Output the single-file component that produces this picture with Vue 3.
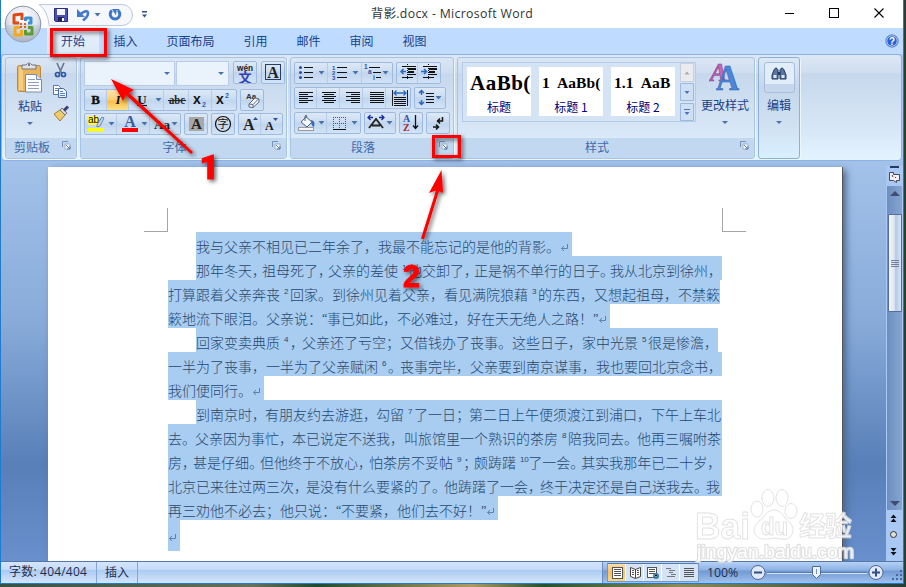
<template>
  <div class="desktop">
    <div class="window">
      <!-- 标题栏 -->
      <header class="titlebar">
        <div class="quick">
          <svg width="160" height="28" v-html="icons.quick" />
        </div>
        <div class="title">背影.docx - Microsoft Word</div>
        <svg class="controls" width="120" height="28" v-html="icons.controls" />
      </header>

      <!-- 选项卡 -->
      <nav class="tabs">
        <span
          v-for="tab in tabs"
          :key="tab.name"
          class="tab"
          :class="{ active: tab.active }"
          :style="{ width: tab.w + 'px' }"
        >{{ tab.name }}</span>
        <svg class="help" width="14" height="14" v-html="icons.help" />
      </nav>

      <!-- 功能区 -->
      <section class="ribbon">
        <div class="group clipboard">
          <div class="group-body clip-body">
            <div class="paste">
              <svg width="30" height="34" v-html="icons.paste" />
              <span class="big-label">粘贴</span>
              <i class="caret" />
            </div>
            <svg width="20" height="66" v-html="icons.clipSide" />
          </div>
          <div class="group-name">
            剪贴板<svg class="launcher" width="9" height="9" v-html="icons.launcher" />
          </div>
        </div>

        <div class="group font">
          <div class="group-body font-body">
            <div class="row first">
              <div class="combo wide"><i class="caret" /></div>
              <div class="combo"><i class="caret" /></div>
              <div v-for="b in fontTop" :key="b.icon" class="btn-set">
                <svg :width="b.w" height="21" v-html="icons[b.icon]" />
              </div>
            </div>
            <div v-for="(row, r) in fontRows" :key="r" class="row">
              <div v-for="(set, s) in row" :key="s" class="btn-set">
                <svg
                  v-for="b in set"
                  :key="b.icon"
                  :class="{ pressed: b.pressed }"
                  :width="b.w"
                  height="20"
                  v-html="icons[b.icon]"
                />
              </div>
            </div>
          </div>
          <div class="group-name">
            字体<svg class="launcher" width="9" height="9" v-html="icons.launcher" />
          </div>
        </div>

        <div class="group paragraph">
          <div class="group-body para-body">
            <div v-for="(row, r) in paraRows" :key="r" class="row">
              <div v-for="(set, s) in row" :key="s" class="btn-set">
                <svg v-for="b in set" :key="b.icon" :width="b.w" height="20" v-html="icons[b.icon]" />
              </div>
            </div>
          </div>
          <div class="group-name">
            段落<svg class="launcher" width="9" height="9" v-html="icons.launcher" />
          </div>
        </div>

        <div class="group styles">
          <div class="group-body style-body">
            <div class="gallery">
              <div v-for="s in styleCards" :key="s.name" class="card">
                <div class="sample" :class="{ small: s.small }">{{ s.sample }}</div>
                <div class="card-name">{{ s.name }}</div>
              </div>
              <svg width="14" height="60" v-html="icons.galleryScroll" />
            </div>
            <div class="change">
              <svg width="32" height="30" v-html="icons.change" />
              <span class="big-label">更改样式</span>
              <i class="caret" />
            </div>
          </div>
          <div class="group-name">
            样式<svg class="launcher" width="9" height="9" v-html="icons.launcher" />
          </div>
        </div>

        <div class="group edit">
          <div class="edit-box"><svg width="16" height="16" v-html="icons.find" /></div>
          <span class="big-label">编辑</span>
          <i class="caret" />
        </div>
      </section>

      <!-- 文档 -->
      <main class="workspace">
        <article class="page">
          <div class="corners"><i class="corner left" /><i class="corner right" /></div>
          <p
            v-for="(line, i) in lines"
            :key="i"
            class="line"
            :class="{ indent: line.indent, last: line.last }"
            :style="{ width: line.w + 'px' }"
          ><span
            v-for="(t, k) in split(line.text)"
            :key="k"
            :class="t.type"
            :style="t.type === 'narrow' ? { width: line.narrow + 'px' } : null"
          >{{ t.text }}</span><svg v-if="line.end" class="mark" width="9" height="9" v-html="icons.mark" /></p>
        </article>
        <aside class="scroll">
          <svg width="17" height="20" v-html="icons.ruler" />
          <div class="track">
            <i class="arrow up" />
            <div class="thumb"><i /><i /><i /><i /></div>
            <i class="arrow down" />
          </div>
          <svg width="17" height="51" v-html="icons.browse" />
        </aside>
      </main>

      <!-- 状态栏 -->
      <footer class="status">
        <div class="status-left">
          <span class="cell count">字数: 404/404</span>
          <span class="cell mode">插入</span>
        </div>
        <div class="status-right">
          <div class="views">
            <svg
              v-for="(v, i) in views"
              :key="v"
              :class="{ current: i === 0 }"
              width="18"
              height="17"
              v-html="icons[v]"
            />
          </div>
          <span class="percent">100%</span>
          <svg width="156" height="21" v-html="icons.zoom" />
        </div>
      </footer>
    </div>

    <svg class="office" width="40" height="40" viewBox="0 0 40 40" v-html="icons.office" />
    <svg class="watermark" width="170" height="80" v-html="icons.watermark" />
    <svg class="notes" width="906" height="587" v-html="icons.notes" />
  </div>
</template>

<script setup>
const tabs = [
  { name: '开始', w: 52, active: true },
  { name: '插入', w: 53 },
  { name: '页面布局', w: 77 },
  { name: '引用', w: 53 },
  { name: '邮件', w: 53 },
  { name: '审阅', w: 53 },
  { name: '视图', w: 53 },
]

const fontTop = [{ icon: 'pinyin', w: 22 }, { icon: 'charBorder', w: 22 }]

const fontRows = [
  [
    [
      { icon: 'bold', w: 22 },
      { icon: 'italic', w: 22, pressed: true },
      { icon: 'underline', w: 35 },
      { icon: 'strike', w: 25 },
      { icon: 'sub', w: 23 },
      { icon: 'sup', w: 24 },
    ],
    [{ icon: 'clear', w: 22 }],
  ],
  [
    [{ icon: 'highlight', w: 32 }, { icon: 'fontColor', w: 33 }, { icon: 'changeCase', w: 30 }],
    [{ icon: 'shade', w: 22 }],
    [{ icon: 'circled', w: 22 }],
    [{ icon: 'grow', w: 22 }, { icon: 'shrink', w: 21 }],
  ],
]

const paraRows = [
  [
    [{ icon: 'bullets', w: 33 }, { icon: 'numbers', w: 34 }, { icon: 'multi', w: 30 }],
    [{ icon: 'outdent', w: 21 }, { icon: 'indent', w: 22 }],
  ],
  [
    [
      { icon: 'alignL', w: 22 },
      { icon: 'alignC', w: 23 },
      { icon: 'alignR', w: 23 },
      { icon: 'alignJ', w: 23 },
      { icon: 'distribute', w: 24 },
    ],
    [{ icon: 'spacing', w: 30 }],
  ],
  [
    [{ icon: 'fill', w: 32 }, { icon: 'borders', w: 33 }],
    [{ icon: 'asian', w: 30 }],
    [{ icon: 'sort', w: 22 }],
    [{ icon: 'showMarks', w: 22 }],
  ],
]

const styleCards = [
  { sample: 'AaBb(', name: '标题' },
  { sample: '1  AaBb(', name: '标题 1', small: true },
  { sample: '1.1  AaB', name: '标题 2', small: true },
]

const views = ['viewPrint', 'viewRead', 'viewWeb', 'viewOutline', 'viewDraft']

// [n] 是注释编号，{，} 是压缩过的标点
const lines = [
  { indent: true, w: 376, end: true, text: '我与父亲不相见已二年余了，我最不能忘记的是他的背影。' },
  { indent: true, w: 526, narrow: 10, text: '那年冬天{，}祖母死了{，}父亲的差使[1]他交卸了{，}正是祸不单行的日子{。}我从北京到徐州，' },
  { w: 552, text: '打算跟着父亲奔丧[2]回家。到徐州见着父亲，看见满院狼藉[3]的东西，又想起祖母，不禁簌' },
  { w: 442, end: true, text: '簌地流下眼泪。父亲说：“事已如此，不必难过，好在天无绝人之路！”' },
  { indent: true, w: 522, narrow: 12, text: '回家变卖典质[4]{，}父亲还了亏空；又借钱办了丧事。这些日子，家中光景[5]很是惨澹，' },
  { w: 554, narrow: 12, text: '一半为了丧事，一半为了父亲赋闲[6]{。}丧事完毕，父亲要到南京谋事，我也要回北京念书，' },
  { w: 96, end: true, text: '我们便同行。' },
  { indent: true, w: 526, narrow: 13, text: '到南京时{，}有朋友约去游逛{，}勾留[7]了一日{；}第二日上午便须渡江到浦口，下午上车北' },
  { w: 554, narrow: 13, text: '去{。}父亲因为事忙{，}本已说定不送我，叫旅馆里一个熟识的茶房[8]陪我同去{。}他再三嘱咐茶' },
  { w: 554, narrow: 11, text: '房{，}甚是仔细{。}但他终于不放心{，}怕茶房不妥帖[9]{；}颇踌躇[10]了一会{。}其实我那年已二十岁，' },
  { w: 554, narrow: 12, text: '北京已来往过两三次{，}是没有什么要紧的了{。}他踌躇了一会{，}终于决定还是自己送我去{。}我' },
  { w: 330, end: true, text: '再三劝他不必去；他只说：“不要紧，他们去不好！”' },
  { w: 12, end: true, last: true, text: '' },
]

function split(text) {
  return (text.match(/\[\d+\]|\{.\}|[“”]|[^[{“”]+/g) || []).map((s) => {
    if (s[0] === '[') return { type: 'note', text: s.slice(1, -1) }
    if (s[0] === '{') return { type: 'narrow', text: s[1] }
    if (s === '“' || s === '”') return { type: 'quote', text: s }
    return { type: 'run', text: s }
  })
}

const serif = 'font-family="Liberation Serif, serif" font-weight="bold"'
const sans = 'font-family="Liberation Sans, sans-serif"'
const caret = (x, y = 9) => `<path d="M${x - 0.5} ${y}h6l-3 3.500z" fill="#4a72a8"/>`

// 一组横线：[x, y, 长度]
const bars = (list, color = '#111') =>
  list.map(([x, y, w]) => `<rect x="${x}" y="${y}" width="${w}" height="1" fill="${color}"/>`).join('')

const icons = {
  quick: `
    <path d="M38 4.500H121a10.500 10.500 0 0 1 0 21H48Q47 11 38 4.500Z" fill="#f5f8fd" stroke="#bdc9dd"/>
    <path d="M53.500 8.500h13v13h-12l-1-1z" fill="#4b4fb8" stroke="#2b2d7d"/><path d="M56 9h8v6h-8z" fill="#f4f6ff"/><path d="M57 17h6v4h-6z" fill="#23234f"/><path d="M61 18h2v3h-2z" fill="#fff"/>
    <path d="M79 14.500q8-6 8-1q0 3-5 7" fill="none" stroke="#4378cb" stroke-width="2.600"/><path d="M76 9v8h8z" fill="#4378cb"/>
    ${caret(94, 13)}
    <path d="M111 10.500a4.800 4.800 0 1 0 6 0" fill="none" stroke="#3e75cb" stroke-width="3"/><path d="M111 9h7v1.500h-2.500l-.5 5z" fill="#3e75cb"/>
    <path d="M141 11h5v1.500h-5zM141 14.500h5l-2.500 3z" fill="#2c4f88"/>`,
  controls: `
    <path d="M14 13.500h9" stroke="#000"/><rect x="58.500" y="8.500" width="9" height="9" fill="none" stroke="#000"/>
    <path d="M103.500 8.500l9 9m0-9l-9 9" stroke="#000" stroke-width="1.100"/>`,
  help: `
    <circle cx="7" cy="7" r="6.200" fill="#2a63d4" stroke="#6b8fc9"/><circle cx="7" cy="7" r="5.200" fill="none" stroke="#cfe0fa" stroke-width=".8"/>
    <text x="7" y="10.500" font-size="10" text-anchor="middle" fill="#fff" font-weight="bold" ${sans}>?</text>`,
  office: `
    <defs><radialGradient id="orb" cx=".5" cy=".3" r=".7"><stop offset="0" stop-color="#fff"/><stop offset=".6" stop-color="#dfe4ee"/><stop offset="1" stop-color="#a3adc0"/></radialGradient></defs>
    <circle cx="20" cy="20" r="17.800" fill="url(#orb)" stroke="#8793a9"/><path d="M3 22a17 17 0 0 0 34 0q-17-5-34 0" fill="#b5bfce" opacity=".4"/>
    <g fill="none" stroke-width="3" stroke-linejoin="round"><path d="M19 16v-6l-8 1v8h5" stroke="#dd4a18"/><path d="M22.500 17v-3H28v5h-3" stroke="#3d8fd0"/><path d="M17 23.500h-5V31h6.500v-5" stroke="#f1a91d"/><path d="M25 23.500h4V30h-6.500v-4" stroke="#5b9d33"/></g>
    <g fill="#e3621b"><rect x="17" y="19" width="2" height="2"/><rect x="21" y="19" width="2" height="2"/><rect x="17" y="22" width="2" height="2"/><rect x="21" y="22" width="2" height="2"/></g>`,
  paste: `
    <rect x="2.500" y="3.500" width="23" height="26" rx="2" fill="#e9b45c" stroke="#bb8740"/><path d="M4 5h4v23H4z" fill="#f5ce82"/>
    <path d="M7 7V3h4q3-4 6 0h4v4z" fill="#dfe1e5" stroke="#707783"/><circle cx="14" cy="3" r="1" fill="#555"/>
    <path d="M10.500 12.500h11l5 5v12.500h-16z" fill="#fbfcff" stroke="#7a8ba8"/><path d="M21.500 12.500v5h5" fill="#dce5f4" stroke="#7a8ba8"/>
    ${bars([[13, 17, 7], [13, 20, 11], [13, 23, 11], [13, 26, 11]], '#8ea0c2')}`,
  clipSide: `
    <path d="M7 1l4.500 10M14 1L9.500 11" stroke="#64748c" stroke-width="1.600"/><circle cx="7.500" cy="12.500" r="2" fill="none" stroke="#2e56a6" stroke-width="1.700"/><circle cx="13.500" cy="12.500" r="2" fill="none" stroke="#2e56a6" stroke-width="1.700"/>
    <path d="M3.500 23.500h5l2 2v7h-7z" fill="#fff" stroke="#5775ad"/><path d="M8.500 26.500h5l3 3v6h-8z" fill="#f1f5fd" stroke="#4668a8"/>${bars([[10, 29, 3], [10, 31, 5], [10, 33, 5], [5, 26, 3], [5, 28, 3]], '#5b80c0')}
    <path d="M4 52l6-4 5 5-5 6z" fill="#eecb6c" stroke="#a77e2d"/><path d="M10 48l2-2 5 5-2 2z" fill="#d8d8dc" stroke="#777"/><path d="M14 48.500l4-4" stroke="#3b3e7b" stroke-width="3"/>`,
  launcher: `
    <path d="M.5 6V.5H6" fill="none" stroke="#7792b8"/><path d="M3 3h5v5H3z" fill="#fff" stroke="#9bb0cc"/><path d="M4 4l4 4M8 5v3H5" stroke="#5b7fae" fill="none"/>`,
  pinyin: `
    <text x="11" y="9" font-size="9" text-anchor="middle" font-weight="bold" fill="#222" ${sans} textLength="16" lengthAdjust="spacingAndGlyphs">wén</text>
    <text x="11" y="19.500" font-size="13" text-anchor="middle" font-weight="bold" fill="#3340b0" font-family="Noto Sans CJK SC, sans-serif">文</text>`,
  charBorder: `<rect x="3.500" y="2.500" width="15" height="15" fill="none" stroke="#2b3b58"/><text x="11" y="15.500" font-size="16" text-anchor="middle" fill="#222" ${serif}>A</text>`,
  bold: `<text x="10.500" y="14" font-size="13" text-anchor="middle" fill="#111" stroke="#111" stroke-width=".4" ${serif}>B</text>`,
  italic: `<text x="11" y="14" font-size="13" text-anchor="middle" font-style="italic" fill="#111" ${serif}>I</text>`,
  underline: `<text x="13" y="13.500" font-size="13" text-anchor="middle" fill="#111" ${serif}>U</text><path d="M8 15.500h10" stroke="#111"/>${caret(27, 8)}`,
  strike: `<text x="13" y="13.500" font-size="13" text-anchor="middle" fill="#222" ${serif} textLength="16" lengthAdjust="spacingAndGlyphs">abc</text><path d="M4 10.500h18" stroke="#222"/>`,
  sub: `<text x="4" y="14" font-size="14" fill="#111" ${sans} font-weight="bold">x</text><text x="13" y="17" font-size="7" font-weight="bold" fill="#2a5bb8" ${sans}>2</text>`,
  sup: `<text x="4" y="14" font-size="14" fill="#111" ${sans} font-weight="bold">x</text><text x="13" y="8" font-size="7" font-weight="bold" fill="#2a5bb8" ${sans}>2</text>`,
  clear: `<text x="10" y="9" font-size="8" text-anchor="middle" font-weight="bold" fill="#333" ${sans}>Aa</text><path d="M8 14l6-6 4 1v3l-6 5.500-4-.5z" fill="#f6f7fb" stroke="#5a6785"/><path d="M8 14l4 .5 5.500-5.500M12 14.500v3" stroke="#5a6785" fill="none"/>`,
  highlight: `<path d="M3 2h10v9H3z" fill="#ffff3d"/><text x="3" y="9" font-size="10" fill="#111" ${sans}>ab</text><path d="M12 11l5-8 2 1-4 8-3 1z" fill="#c9d6ee" stroke="#56698d" stroke-width=".8"/><path d="M3 14h16v3.500H3z" fill="#ff0"/>${caret(24, 8)}`,
  fontColor: `<text x="13" y="13" font-size="16" text-anchor="middle" fill="#3a5ba0" ${serif}>A</text><path d="M5 14h16v4H5z" fill="#f00"/>${caret(25, 8)}`,
  changeCase: `<text x="4" y="15" font-size="13" fill="#222" ${serif} textLength="16" lengthAdjust="spacingAndGlyphs">Aa</text>${caret(22, 8)}`,
  shade: `<path d="M4 3h15v14H4z" fill="#a8a8a8"/><text x="11.500" y="15" font-size="15" text-anchor="middle" fill="#222" ${serif}>A</text>`,
  circled: `<circle cx="11" cy="10" r="7.500" fill="none" stroke="#111" stroke-width="1.200"/><text x="11" y="14" font-size="11" text-anchor="middle" fill="#111" font-family="Noto Sans CJK SC, sans-serif">字</text>`,
  grow: `<text x="4" y="16" font-size="16" fill="#222" ${serif}>A</text><path d="M14 6h5l-2.500-3z" fill="#28519b"/>`,
  shrink: `<text x="4" y="16" font-size="12" fill="#222" ${serif}>A</text><path d="M12 4h5l-2.500 3z" fill="#28519b"/>`,
  bullets: `<g fill="#2b4f9c"><circle cx="5.500" cy="4.500" r="1.500"/><circle cx="5.500" cy="9.500" r="1.500"/><circle cx="5.500" cy="14.500" r="1.500"/></g>${bars([[9, 4, 9], [9, 9, 9], [9, 14, 9]])}${caret(24, 8)}`,
  numbers: `<g font-size="6" fill="#2b4f9c" font-weight="bold" ${sans}><text x="4" y="7">1</text><text x="4" y="12">2</text><text x="4" y="17">3</text></g>${bars([[9, 4, 10], [9, 9, 10], [9, 14, 10]])}${caret(25, 8)}`,
  multi: `<g font-size="6.500" fill="#2b4f9c" font-weight="bold" ${sans}><text x="2" y="6">1</text><text x="6" y="11">a</text><text x="11" y="17">i</text></g>${bars([[7, 4, 11], [11, 9, 8], [14, 14, 5]])}${caret(21, 8)}`,
  outdent: `${bars([[5, 3, 14], [11, 6, 8], [11, 8, 6], [11, 11, 8], [5, 14, 11]])}${bars([[11, 5, 8], [11, 9, 6]])}<path d="M10.500 1v16" stroke="#111" stroke-dasharray="1 1"/><path d="M9 8.500H4M6.500 6L4 8.500 6.500 11" stroke="#2c66c4" fill="none" stroke-width="1.500"/>`,
  indent: `${bars([[5, 3, 14], [11, 6, 8], [11, 8, 6], [11, 11, 8], [5, 14, 11]])}${bars([[11, 5, 8], [11, 9, 6]])}<path d="M10.500 1v16" stroke="#111" stroke-dasharray="1 1"/><path d="M3 8.500h5M6 6l2.500 2.500L6 11" stroke="#2c66c4" fill="none" stroke-width="1.500"/>`,
  alignL: bars([[4, 4, 14], [4, 6, 9], [4, 8, 14], [4, 10, 9], [4, 12, 14], [4, 14, 9]]),
  alignC: bars([[5, 4, 14], [7, 6, 10], [5, 8, 14], [7, 10, 10], [5, 12, 14], [7, 14, 10]]),
  alignR: bars([[6, 4, 14], [11, 6, 9], [6, 8, 14], [11, 10, 9], [6, 12, 14], [11, 14, 9]]),
  alignJ: bars([[7, 4, 14], [7, 6, 14], [7, 8, 14], [7, 10, 14], [7, 12, 14], [7, 14, 14]]),
  distribute: `<path d="M6.500 2v16M21.500 2v16" stroke="#222"/><path d="M8 5h12M10.500 2.500L8 5l2.500 2.500M17.500 2.500L20 5l-2.500 2.500" stroke="#2c66c4" fill="none" stroke-width="1.300"/>${bars([[8, 9, 12], [8, 11, 12], [8, 13, 12], [8, 15, 12], [8, 17, 12]])}`,
  spacing: `<path d="M6.500 2.500v4.500M6.500 12v4.500M4 5L6.500 2.500 9 5M4 14l2.500 2.500L9 14" stroke="#2c66c4" fill="none" stroke-width="1.500"/>${bars([[11, 5, 8], [11, 8, 8], [11, 11, 8], [11, 14, 8]])}${caret(21, 8)}`,
  fill: `<path d="M6 9l5-5 6 5-5 5z" fill="#f6f8fc" stroke="#49607f"/><path d="M10 8V3q1.500-2 2 1" stroke="#49607f" fill="none"/><path d="M16 7q5 1 3 7q-3-1-3-7" fill="#3a68b8"/><rect x="3.500" y="14.500" width="15" height="3" fill="#f5f5f5" stroke="#9a9a9a"/>${caret(24, 8)}`,
  borders: `<path d="M6.500 4v12M12.500 4v12M18.500 4v12M6 4.500h13M6 10.500h13" stroke="#555" stroke-dasharray="1 1" fill="none"/><path d="M6 16.500h13" stroke="#111"/>${caret(25, 8)}`,
  asian: `<path d="M4 15L11 6 18 15M7 12.500h8" stroke="#222" stroke-width="1.800" fill="none"/><path d="M3 4.500h5M5.500 2L3 4.500 5.500 7M19 4.500h-5M16.500 2L19 4.500 16.500 7" stroke="#1a2b9c" fill="none" stroke-width="1.300"/>${caret(22, 8)}`,
  sort: `<text x="3" y="9" font-size="10" fill="#2b57a8" ${serif}>A</text><text x="3" y="18" font-size="10" fill="#a32d2d" ${serif}>Z</text><path d="M15.500 2v13M13 12.500l2.500 3 2.500-3" stroke="#111" stroke-width="1.300" fill="none"/>`,
  showMarks: `<path d="M15.500 4v4H11M13 5.500L10.500 8l2.500 2.500M6 14h5M9 11.500l2.500 2.500L9 16.500" stroke="#111" stroke-width="1.500" fill="none"/>`,
  galleryScroll: `
    <path d="M.5.500h13v18H.5z" fill="#e9ebee" stroke="#c5cfdd"/><path d="M.5 20.500h13v17H.5zM.5 40.500h13v17H.5z" fill="#cfdff4" stroke="#9db8dd"/>
    <path d="M4.500 11.500h5l-2.500-3z" fill="#aaa"/><path d="M4.500 28h5L7 31zM4.500 49h5L7 52z" fill="#4a76b8"/><path d="M4 46.500h6" stroke="#4a76b8"/>`,
  change: `
    <g ${serif} stroke-width=".6"><text x="1" y="19" font-size="25" fill="#c368bd" stroke="#8d3d8b" font-style="italic" textLength="17" lengthAdjust="spacingAndGlyphs">A</text>
    <text x="7" y="28" font-size="35" fill="#4c87dd" stroke="#2d5ea9" textLength="23" lengthAdjust="spacingAndGlyphs">A</text></g>`,
  find: `
    <path d="M3 4q2-4 4 0v9H1V9zM13 4q-2-4-4 0v9h6V9z" fill="#5b74a4" stroke="#23395f"/><path d="M7 6h2v3H7z" fill="#23395f"/><path d="M2.500 9h3v3h-3zM10.500 9h3v3h-3z" fill="#dbe6f8"/>`,
  mark: `<path d="M7.500 1v4.500H1.500M4 3L1.500 5.500 4 8" stroke="#5f82ab" fill="none"/>`,
  ruler: `<path d="M4 1h9" stroke="#233b5f" stroke-width="2"/><path d="M3.500 6.500h4v2h6v6h-3v2l-3-2h-4z" fill="#f6f0f4" stroke="#444b5c"/><path d="M6 9l1 2M9 11l1 1" stroke="#444"/>`,
  browse: `
    <path d="M4.500 8L7.500 4.500 10.500 8zM4.500 12L7.500 8.500 10.500 12z" fill="#111"/><circle cx="7.500" cy="24.500" r="3" fill="#e0e0d8" stroke="#333"/>
    <path d="M4.500 38L7.500 41.500 10.500 38zM4.500 42L7.500 45.500 10.500 42z" fill="#111"/>`,
  viewPrint: `<rect x="4.500" y="3.500" width="10" height="11" fill="#fff" stroke="#555"/>${bars([[6, 5, 7], [6, 7, 7], [6, 9, 7], [6, 11, 7]], '#555')}`,
  viewRead: `<path d="M4.500 3.500l5 2 5-2v9l-5 2-5-2zM9.500 5v9" fill="#fff" stroke="#444"/>${bars([[6, 6, 2], [6, 8, 2], [6, 10, 2], [11, 6, 2], [11, 8, 2], [11, 10, 2]], '#555')}`,
  viewWeb: `<rect x="3.500" y="3.500" width="9" height="10" fill="#fff" stroke="#555"/>${bars([[5, 5, 6], [5, 7, 6], [5, 9, 6]], '#555')}<circle cx="12" cy="12" r="3" fill="#3779bb"/><path d="M10 11l2 2 2-2" stroke="#5aaa55"/>`,
  viewOutline: bars([[4, 4, 5], [7, 6, 6], [7, 8, 4], [9, 10, 5], [5, 12, 8]], '#777'),
  viewDraft: bars([[4, 4, 10], [4, 6, 10], [4, 8, 10], [4, 10, 10], [4, 12, 10]], '#555'),
  zoom: `
    <path d="M20 10.500h100" stroke="#5779ab"/><path d="M20 11.500h100" stroke="#d9e6fa"/>
    <g fill="#dfe9f8" stroke="#4d6998"><circle cx="11" cy="10.500" r="7"/><circle cx="129" cy="10.500" r="7"/></g>
    <path d="M7 10.500h8M125 10.500h8M129 6.500v8" stroke="#314f80" stroke-width="2"/>
    <path d="M65.500 4.500h8v8l-4 4-4-4z" fill="#eef3fb" stroke="#4d6998"/><path d="M69.500 7v5" stroke="#7790b6"/>
    <g fill="#46689f"><rect x="153" y="8" width="2" height="2"/><rect x="149" y="12" width="2" height="2"/><rect x="153" y="12" width="2" height="2"/><rect x="145" y="16" width="2" height="2"/><rect x="149" y="16" width="2" height="2"/><rect x="153" y="16" width="2" height="2"/></g>`,
  watermark: `
    <g fill="#fff" stroke="#dedede" stroke-width="1" opacity=".88" stroke-linejoin="round" font-weight="bold">
      <text x="2" y="51" font-size="37" textLength="55" lengthAdjust="spacingAndGlyphs" ${sans}>Bai</text>
      <ellipse cx="64" cy="21" rx="6" ry="8"/><ellipse cx="75" cy="10" rx="6" ry="8.500"/><ellipse cx="89" cy="10" rx="6" ry="8.500"/><ellipse cx="98" cy="23" rx="6" ry="7.500"/>
      <path d="M81 22q7 0 11 8q9 6 8 14q-3 9-12 7q-7-2-14 0q-11 1-13-8q0-7 8-12q5-9 12-9z"/>
      <text x="68" y="47" font-size="24" textLength="27" lengthAdjust="spacingAndGlyphs" ${sans}>du</text>
      <text x="106" y="48" font-size="27" textLength="53" font-family="Noto Sans CJK SC, sans-serif">经验</text>
      <text x="4" y="70" font-size="18" font-weight="normal" textLength="157" lengthAdjust="spacingAndGlyphs" stroke-width="2.400" paint-order="stroke" ${sans}>jingyan.baidu.com</text>
    </g>`,
  notes: `
    <defs><filter id="soft" x="-20%" y="-20%" width="150%" height="150%"><feDropShadow dx="2" dy="2" stdDeviation="2" flood-color="#000" flood-opacity=".6"/></filter></defs>
    <g fill="none" stroke="#f00" stroke-width="3" filter="url(#soft)"><rect x="51.500" y="29.500" width="54" height="26"/><rect x="433.500" y="136.500" width="26" height="20"/></g>
    <g fill="#f00" filter="url(#soft)">
      <path d="M111 79l23 11-5 3 64 59-2 2-65-59-3 6z"/>
      <path d="M441.500 170l1.500 23-4-2-15 48.500-3-1L436 190.500l-7 2.500z"/>
      <text x="199.500" y="178.500" font-size="34" font-weight="900" stroke="#f00" stroke-width="1" font-family="Roboto, sans-serif">1</text>
      <text x="403" y="286.500" font-size="32" font-weight="bold" stroke="#f00" stroke-width="1" ${sans} textLength="17" lengthAdjust="spacingAndGlyphs">2</text>
    </g>`,
}
</script>

<style>
body {
  overflow: hidden;
}
</style>

<style scoped>
.desktop {
  position: relative;
  box-sizing: border-box;
  width: 906px;
  height: 587px;
  padding-right: 2px;
  overflow: hidden;
  background: linear-gradient(90deg, #355343, #67705a 28%, #1e4b2e 35%, #b09a60 52%, #25512b 60%, #8b8b55 75%, #263e35);
  font-family: "Noto Sans CJK SC", sans-serif;
  font-size: 12px;
  color: #15428b;
}

.window {
  box-sizing: border-box;
  display: flex;
  flex-direction: column;
  width: 904px;
  height: 584px;
  border: 1px solid #1e7bd0;
  border-top: none;
  background: #a5c5f0;
}

.titlebar {
  display: flex;
  flex: none;
  height: 28px;
  background: #fff;
}

.quick {
  width: 370px;
}

.title {
  flex: 1;
  font-family: "Open Sans", "Noto Sans CJK SC", sans-serif;
  font-size: 12.3px;
  line-height: 27px;
  letter-spacing: 0.33px;
  color: #333;
  white-space: nowrap;
}

.controls {
  margin-right: 12px;
}

/* 选项卡 */
.tabs {
  display: flex;
  flex: none;
  align-items: center;
  box-sizing: border-box;
  height: 26px;
  padding: 0 4px 0 46px;
  background: #bfdbff;
}

.tab {
  height: 26px;
  line-height: 26px;
  text-align: center;
}

.tab.active {
  background: linear-gradient(#e8f1fd, #dce8f6);
}

.help {
  margin-left: auto;
}

/* 功能区 */
.ribbon {
  display: flex;
  flex: none;
  gap: 3px;
  box-sizing: border-box;
  height: 107px;
  margin: 0 1px 0 0;
  padding: 2px;
  border: 1px solid #8db2e3;
  border-radius: 4px;
  background: linear-gradient(#dde8f5, #cfddef 17%, #c7d8ed 18%, #d9e8f7 75%, #e3f4ff);
}

.group {
  display: flex;
  flex-direction: column;
  flex: none;
  box-sizing: border-box;
  height: 102px;
  border: 1px solid #a9c3e2;
  border-radius: 3px;
  overflow: hidden;
  box-shadow: 1px 1px 0 #edf5fd;
}

.clipboard {
  width: 72px;
  margin-left: 1px;
}

.font { width: 207px; }
.paragraph { width: 164px; }
.styles { width: 298px; }

.group-body {
  flex: 1;
}

.group-name {
  position: relative;
  flex: none;
  height: 20px;
  padding-right: 18px;
  background: #c1d8f0;
  color: #3e6aaa;
  line-height: 18px;
  text-align: center;
}

.launcher {
  position: absolute;
  top: 3px;
  right: 5px;
}

.big-label {
  line-height: 16px;
  white-space: nowrap;
}

.caret {
  width: 0;
  border: 3px solid transparent;
  border-top: 3px solid #4a72a8;
  border-bottom: none;
}

.clip-body {
  display: flex;
  gap: 3px;
  padding: 4px 0 0 7px;
}

.paste {
  display: flex;
  flex-direction: column;
  align-items: center;
  width: 34px;
}

.paste .big-label {
  margin-top: 2px;
}

.paste .caret {
  margin-top: 8px;
}

.row {
  display: flex;
  gap: 3px;
}

.font-body {
  display: flex;
  flex-direction: column;
  gap: 2px;
  padding: 3px 0 0 3px;
}

.row.first {
  height: 26px;
  gap: 1px;
}

.row.first .btn-set {
  margin-left: 3px;
}

.combo {
  display: flex;
  align-items: center;
  justify-content: flex-end;
  box-sizing: border-box;
  width: 53px;
  height: 25px;
  padding-right: 4px;
  border: 1px solid #b7cde9;
  background: #eaf2fb;
}

.combo.wide {
  width: 91px;
}

.btn-set {
  display: flex;
  flex: none;
  align-self: flex-start;
  border: 1px solid #9ebbdf;
  border-radius: 2px;
  background: linear-gradient(#dce8f6, #cbdcf1 45%, #bfd5ef 50%, #d2e3f6);
}

.btn-set svg + svg {
  box-shadow: -1px 0 0 #b5cbe7;
}

.pressed {
  background: linear-gradient(#fde4ae, #fdce75 50%, #fbbd46 55%, #fee189);
}

.para-body {
  display: flex;
  flex-direction: column;
  gap: 3px;
  padding: 4px 0 0 3px;
}

.style-body {
  display: flex;
  padding: 4px 0 0 4px;
}

.gallery {
  display: flex;
  box-sizing: border-box;
  width: 234px;
  height: 60px;
  border: 1px solid #b5cce8;
  padding-left: 4px;
  gap: 8px;
  background: #d5e4f5;
}

.gallery > svg {
  flex: none;
  margin-left: -3px;
}

.card {
  flex: none;
  width: 64px;
  height: 49px;
  margin-top: 4px;
  background: #fff;
  text-align: center;
}

.sample {
  width: 60px;
  height: 32px;
  margin-left: 3px;
  font: bold 21px/32px "Liberation Serif", serif;
  letter-spacing: 0.5px;
  color: #000;
  text-align: left;
  white-space: pre;
}

.sample.small {
  font-size: 15.5px;
  letter-spacing: 0.1px;
}

.card-name {
  color: #000080;
  line-height: 16px;
}

.change {
  display: flex;
  flex: 1;
  flex-direction: column;
  align-items: center;
}

.change .big-label {
  margin-top: 5px;
}

.change .caret {
  margin-top: 8px;
}

.edit {
  align-items: center;
  width: 42px;
  padding-top: 4px;
  border-color: #8eb1d3;
  background: linear-gradient(#dce8f5, #c5d7ec 30%, #d0e0f1 65%, #d8f0ff);
}

.edit-box {
  display: flex;
  align-items: center;
  justify-content: center;
  box-sizing: border-box;
  width: 31px;
  height: 31px;
  margin-bottom: 4px;
  padding-bottom: 7px;
  border: 1px solid #a5bddb;
  border-radius: 3px;
  background: linear-gradient(#e2edf9 72%, #c5d7ec 73%);
}

.edit .caret {
  margin-top: 8px;
}

/* 文档 */
.workspace {
  display: flex;
  flex: 1;
  min-height: 0;
  padding-left: 47px;
  background: linear-gradient(#a3c2ea, #88abd9 40%, #587fb8 76%, #6890cc);
}

.page {
  box-sizing: border-box;
  width: 794px;
  height: 394px;
  margin-top: 6px;
  padding: 41px 0 0 120px;
  background: #fff;
  box-shadow: 1px 0 0 #555, 4px 3px 7px #49658e;
}

.corners {
  display: flex;
  justify-content: space-between;
  width: 602px;
  height: 24px;
  margin-left: -24px;
}

.corner {
  box-sizing: border-box;
  width: 24px;
  height: 24px;
  border-bottom: 1px solid #a5a5a5;
}

.corner.left { border-right: 1px solid #a5a5a5; }
.corner.right { border-left: 1px solid #a5a5a5; }

.line {
  display: flex;
  height: 24px;
  margin: 0;
  background: #a9cdf1;
  color: #26486f;
  font-size: 14px;
  line-height: 29px;
  font-weight: 300;
  white-space: nowrap;
  text-spacing-trim: space-all;
}

.line.indent {
  margin-left: 28px;
}

.line.last {
  height: 31px;
}

.line span {
  flex: none;
}

.note {
  box-sizing: border-box;
  min-width: 10px;
  padding-left: 4px;
  font: 8px/23px "Liberation Sans", sans-serif;
  letter-spacing: -0.3px;
}

.quote {
  width: 5px;
  font-family: "Liberation Serif", serif;
  font-size: 12px;
}

.mark {
  flex: none;
  margin-top: 11px;
}

.last .mark {
  margin-top: 13px;
}

/* 滚动条 */
.scroll {
  display: flex;
  flex-direction: column;
  width: 17px;
  margin: 5px 0 0 auto;
  background: #a9c8f3;
}

.track {
  display: flex;
  flex: 1;
  flex-direction: column;
  align-items: center;
  width: 15px;
  margin-left: 1px;
  background: linear-gradient(90deg, #6c8fc0, #86a5d1);
}

.arrow {
  border: 5px solid transparent;
}

.arrow.up {
  border-bottom-color: #3f4d70;
}

.arrow.down {
  margin-top: auto;
  margin-bottom: -1px;
  border-top-color: #3f4d70;
}

.thumb {
  display: flex;
  flex-direction: column;
  align-items: center;
  justify-content: center;
  gap: 1px;
  box-sizing: border-box;
  width: 14px;
  height: 98px;
  margin-top: 18px;
  border: 1px solid #566b9e;
  border-radius: 1px;
  background: linear-gradient(90deg, #f2f6fb, #dbe4f0 45%, #b6c8e2 55%, #d8e4f3);
}

.thumb i {
  width: 8px;
  height: 1px;
  background: #718098;
}

/* 状态栏 */
.status {
  display: flex;
  flex: none;
  box-sizing: border-box;
  height: 22px;
  border-top: 1px solid #5578a8;
  background: linear-gradient(#d5e5fb, #c6dcfa 35%, #abcbf3 40%, #d5e6fb);
  color: #1b2e50;
}

.status-left {
  display: flex;
  width: 601px;
}

.cell {
  box-sizing: border-box;
  padding-left: 8px;
  border-right: 1px solid #85a7d5;
  line-height: 20px;
}

.count {
  width: 96px;
  font-family: "Open Sans", "Noto Sans CJK SC", sans-serif;
  letter-spacing: 0.2px;
}

.mode { width: 41px; }

.status-right {
  display: flex;
  flex: 1;
  align-items: center;
  padding-left: 4px;
  border-left: 1px solid #688dbe;
  background: linear-gradient(#b5d0f5, #92b5e6 35%, #729bd5 45%, #a0c2ee);
}

.views {
  display: flex;
  border: 1px solid #7796c2;
  border-top-color: #5779a8;
  background: #d5e3f6;
}

.views svg + svg {
  box-shadow: -1px 0 0 #fff;
}

.views .current {
  background: linear-gradient(#fde0ac, #f9bd62 50%, #fed783);
}

.percent {
  width: 41px;
  padding-left: 8px;
  font-family: "Open Sans", sans-serif;
  font-size: 12.3px;
}

.status-right > svg {
  flex: none;
  margin-left: -1px;
}

/* 浮层 */
.office {
  position: absolute;
  top: 4px;
  left: 3px;
}

.watermark {
  position: absolute;
  top: 488px;
  left: 693px;
}

.notes {
  position: absolute;
  top: 0;
  left: 0;
}
</style>
